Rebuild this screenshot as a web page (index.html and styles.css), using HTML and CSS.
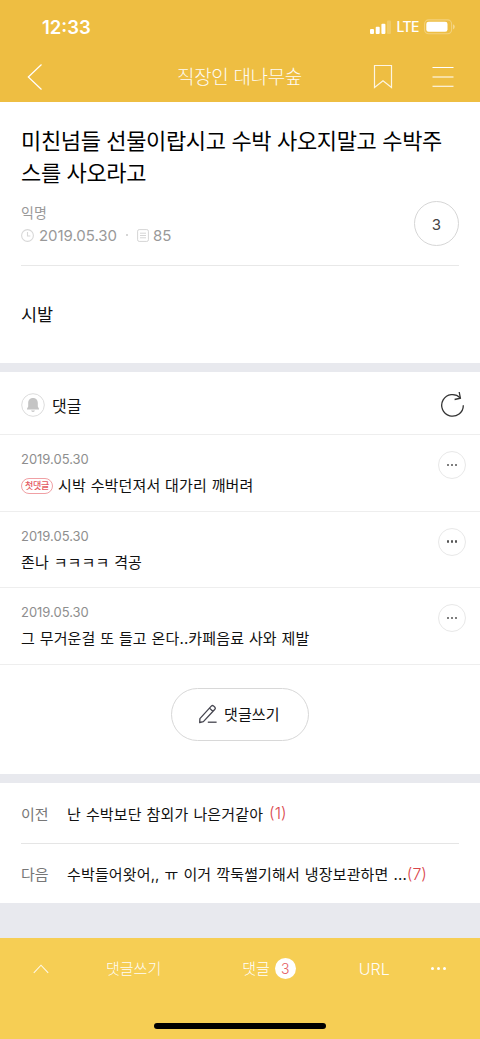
FILE: index.html
```html
<!DOCTYPE html>
<html lang="ko">
<head>
<meta charset="utf-8">
<meta name="viewport" content="width=device-width">
<title>직장인 대나무숲</title>
<link rel="stylesheet" href="styles.css">
</head>
<body>
<header class="top">
  <div class="status">
    <span class="clock">12:33</span>
    <div class="signals">
      <svg width="22" height="14" viewBox="0 0 22 14" fill="#fff"><rect x="0" y="9" width="4" height="5" rx="1"/><rect x="5.7" y="6.7" width="4" height="7.3" rx="1"/><rect x="11.4" y="3.7" width="4" height="10.3" rx="1"/><rect x="17" y="0.5" width="4" height="13.5" rx="1" opacity=".2"/></svg>
      <span class="lte">LTE</span>
      <svg width="31" height="16" viewBox="0 0 31 16"><rect x=".6" y=".9" width="27" height="13.8" rx="4" fill="none" stroke="#fff" stroke-opacity=".3" stroke-width="1.1"/><rect x="2.3" y="2.8" width="21.2" height="10" rx="2.3" fill="#fff"/><path d="M29 5.2q1.8.8 1.8 2.6T29 10.4z" fill="#fff" opacity=".4"/></svg>
    </div>
  </div>
  <nav class="navbar">
    <svg class="back" width="16" height="28" viewBox="0 0 16 28"><path d="M14.5 1.5 1.3 14 14.5 26.5" fill="none" stroke="#fff" stroke-width="1.2"/></svg>
    <span class="nav-title">직장인 대나무숲</span>
    <svg class="bookmark" width="20" height="26" viewBox="0 0 20 26"><path d="M1.5 1.5h17v22L10 16.7 1.5 23.5z" fill="none" stroke="#fff" stroke-opacity=".85" stroke-width="1.2"/></svg>
    <svg class="burger" width="22" height="24" viewBox="0 0 22 24"><path d="M.5 2.5h21M.5 12h21M.5 21.3h21" stroke="#fff" stroke-width="1.1"/></svg>
  </nav>
</header>

<main>
  <article class="post">
    <h1 class="title">미친넘들 선물이랍시고 수박 사오지말고 수박주<br>스를 사오라고</h1>
    <div class="meta">
      <div class="meta-text">
        <div class="author">익명</div>
        <div class="stats">
          <svg class="clock-icon" width="13" height="13" viewBox="0 0 13 13" fill="none" stroke="#d8d8d8" stroke-width="1.1"><circle cx="6.5" cy="6.5" r="5.9"/><path d="M6.5 3v4H9.3"/></svg>
          <span class="date">2019.05.30</span>
          <span class="dot"></span>
          <svg class="page-icon" width="12" height="13" viewBox="0 0 12 13" fill="none" stroke="#d5d5d5" stroke-width="1"><rect x=".6" y=".6" width="10.8" height="11.8" rx="1.6"/><path d="M3 4.2h6M3 6.5h6M3 8.8h6"/></svg>
          <span class="views">85</span>
        </div>
      </div>
      <div class="count">3</div>
    </div>
    <p class="body">시발</p>
  </article>

  <section class="comments">
    <div class="comments-head">
      <svg width="24" height="24" viewBox="0 0 24 24"><circle cx="12" cy="12" r="11.3" fill="none" stroke="#dcdcdc"/><path d="M12 5c-3.2 0-4.8 2.2-4.8 5v3.6L6 15.7v.8h12v-.8l-1.2-2.1V10c0-2.8-1.6-5-4.8-5zM10 17.5h4q-.5 1.4-2 1.4t-2-1.4z" fill="#c4c4c4"/></svg>
      <span class="comments-label">댓글</span>
      <svg width="25" height="27" viewBox="0 0 25 27" fill="none" stroke="#333" stroke-width="1.3"><path d="M23.3 14.3A10.8 10.8 0 1 1 20.2 6.8"/><path d="M19.2 1l1.2 6.2-5.8 1.3"/></svg>
    </div>
    <div class="comment">
      <div class="comment-main"><div class="when">2019.05.30</div><div class="text"><span class="first">첫댓글</span><span>시박 수박던져서 대가리 깨버려</span></div></div>
      <div class="more"><i></i><i></i><i></i></div>
    </div>
    <div class="comment">
      <div class="comment-main"><div class="when">2019.05.30</div><div class="text">존나 ㅋㅋㅋㅋ 격공</div></div>
      <div class="more"><i></i><i></i><i></i></div>
    </div>
    <div class="comment">
      <div class="comment-main"><div class="when">2019.05.30</div><div class="text">그 무거운걸 또 들고 온다..카페음료 사와 제발</div></div>
      <div class="more"><i></i><i></i><i></i></div>
    </div>
    <div class="write-area">
      <div class="write">
        <svg width="18" height="20" viewBox="0 0 18 20" fill="none" stroke="#45454f" stroke-width="1.3" stroke-linejoin="round"><path d="M.9 14.6 12.5 1.9q1-.9 2 0l1.4 1.4q.9 1 0 2L4.4 17.6l-3.7.9zM10.5 4.1l3.3 3.2"/><path d="M8.8 18.2h8.8"/></svg>
        <span class="write-label">댓글쓰기</span>
      </div>
    </div>
  </section>

  <section class="siblings">
    <div class="sibling"><span class="dir">이전</span><span class="link">난 수박보단 참외가 나은거같아</span><span class="num gap">(1)</span></div>
    <div class="sibling"><span class="dir">다음</span><span class="link">수박들어왓어,, ㅠ 이거 깍둑썰기해서 냉장보관하면 ...</span><span class="num">(7)</span></div>
  </section>
</main>

<footer class="bottom">
  <div class="tabs">
    <svg class="up" width="16" height="10" viewBox="0 0 16 10"><path d="M.8 8.8 8 1.2l7.2 7.6" fill="none" stroke="#fff" stroke-opacity=".85" stroke-width="1.1"/></svg>
    <span class="tab-write">댓글쓰기</span>
    <span class="tab-comments"><span class="tab-label">댓글</span><b class="badge">3</b></span>
    <span class="tab-url">URL</span>
    <span class="tab-more"><i></i><i></i><i></i></span>
  </div>
  <div class="home"></div>
</footer>
</body>
</html>
```
FILE: styles.css
```css
* { box-sizing: border-box; }
body {
  margin: 0;
  width: 480px;
  height: 1039px;
  display: flex;
  flex-direction: column;
  background: #e8e9ee;
  color: #111;
  font-family: Inter, "Noto Sans CJK KR", sans-serif;
  font-size: 15px;
  overflow: hidden;
}
svg, span { flex: none; white-space: nowrap; }
svg { display: block; }

.top { height: 102px; background: #eebe42; color: #fff; }
.status { height: 52px; display: flex; justify-content: space-between; padding: 0 25px 0 42px; }
.clock { font-size: 18.5px; line-height: 22px; font-weight: 600; padding-top: 16px; }
.signals { display: flex; align-items: center; height: 53px; }
.lte { font-size: 14px; font-weight: 500; letter-spacing: -.55px; margin: 0 5px 0 4px; line-height: 18px; padding-top: 1px; }
.navbar { height: 50px; display: flex; align-items: center; padding: 0 26px 0 27px; }
.nav-title { font-size: 19px; font-weight: 300; line-height: 26px; margin-left: 134px; padding-top: 2px; letter-spacing: -.35px; opacity: .95; }
.bookmark { margin-left: auto; }
.burger { margin-left: 39px; }

.post { height: 261px; background: #fff; padding: 23px 21px 0; }
.title { margin: 0; font-size: 22px; font-weight: 400; line-height: 32px; white-space: nowrap; letter-spacing: -.36px; color: #000; }
.meta { height: 77px; display: flex; justify-content: space-between; border-bottom: 1.5px solid #e8e8e8; padding-top: 12px; }
.author { font-size: 14px; line-height: 23px; color: #999; }
.stats { display: flex; align-items: center; height: 23px; padding-top: 1px; font-size: 15px; line-height: 22px; color: #999; }
.clock-icon, .page-icon { margin-bottom: 2px; }
.date { margin-left: 5px; letter-spacing: -.05px; }
.dot { width: 2px; height: 2px; border-radius: 50%; background: #c9c9c9; margin: 0 9px 3px; }
.views { margin-left: 4px; }
.count { width: 45px; height: 45px; border: 1px solid #d6d6d6; border-radius: 50%; display: flex; align-items: center; justify-content: center; font-size: 15px; color: #444; padding-top: 2px; }
.body { margin: 35px 0 0; font-size: 17.5px; line-height: 28px; }

.comments { margin-top: 9px; height: 402px; background: #fff; display: flex; flex-direction: column; }
.comments-head { height: 63px; display: flex; align-items: center; padding: 3px 15px 0 21px; border-bottom: 1.5px solid #eee; }
.comments-label { font-size: 16px; margin: 0 auto 0 7px; padding-bottom: 0; }
.comment { height: 76.5px; display: flex; justify-content: space-between; padding: 16px 14px 0 21px; border-bottom: 1.5px solid #eee; }
.when { font-size: 13px; line-height: 16px; color: #8e8e8e; letter-spacing: -.02px; }
.text { display: flex; align-items: center; margin-top: 7px; line-height: 24px; font-size: 15px; letter-spacing: .14px; word-spacing: .4px; white-space: nowrap; }
.first { width: 32px; height: 16px; border: 1px solid #f0a0a4; border-radius: 8px; font-size: 9px; line-height: 14px; letter-spacing: -.2px; text-align: center; color: #e45b62; margin-right: 5px; font-weight: 500; }
.more { width: 28px; height: 28px; border: 1px solid #e8e8e8; border-radius: 50%; display: flex; align-items: center; justify-content: center; gap: 1.5px; }
.more i { width: 2.6px; height: 2.6px; border-radius: 50%; background: #555; }
.write-area { flex: 1; display: flex; justify-content: center; padding-top: 23px; }
.write { width: 138px; height: 53px; border: 1px solid #d8d8d8; border-radius: 27px; display: flex; align-items: center; padding-left: 27px; gap: 7px; font-size: 15px; }
.write-label { padding-bottom: 2px; letter-spacing: .1px; }

.siblings { margin-top: 9px; height: 120px; background: #fff; padding: 0 21px; }
.sibling { height: 60px; display: flex; align-items: center; white-space: nowrap; }
.sibling + .sibling { border-top: 1px solid #e5e5e5; }
.dir { color: #777; width: 46px; }
.link { letter-spacing: .14px; word-spacing: .6px; }
.num { color: #d9464b; font-size: 16px; font-weight: 300; }
.gap { margin-left: 6px; }

.bottom { margin-top: auto; height: 101px; background: #f6ce54; color: #fff; }
.tabs { height: 61px; display: flex; align-items: center; padding: 0 34px 0 33px; font-weight: 300; }
.tab-write { margin-left: 57px; padding-bottom: 2px; opacity: .95; }
.tab-comments { margin-left: 81px; display: flex; align-items: center; gap: 5px; }
.tab-label { padding-bottom: 2px; }
.badge { width: 21px; height: 21px; border-radius: 50%; background: #fff; color: #e45b62; font-size: 14px; font-weight: 300; line-height: 21px; text-align: center; }
.tab-url { margin-left: 63px; font-size: 16px; opacity: .95; }
.tab-more { margin-left: auto; display: flex; gap: 3px; }
.tab-more i { width: 3px; height: 3px; border-radius: 50%; background: #fff; }
.home { width: 172px; height: 6px; margin: 24px auto 0; border-radius: 3px; background: #000; }
```
